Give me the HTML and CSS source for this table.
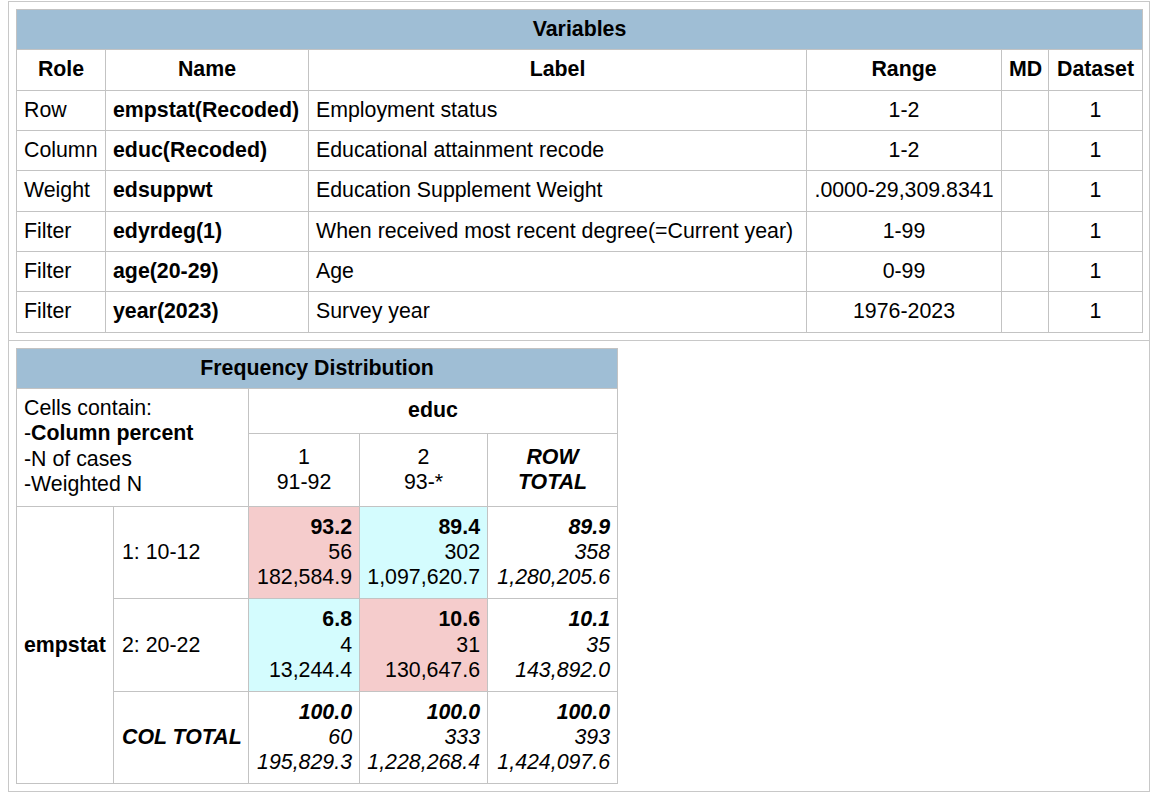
FILE: index.html
```html
<!DOCTYPE html>
<html lang="en">
<head>
<meta charset="utf-8">
<title>Variables / Frequency Distribution</title>
<link rel="stylesheet" href="styles.css">
</head>
<body>
<div class="panel">
  <section class="block block-top">
    <table class="grid vars">
      <colgroup>
        <col class="c-role"><col class="c-name"><col class="c-label"><col class="c-range"><col class="c-md"><col class="c-ds">
      </colgroup>
      <thead>
        <tr><th class="band" colspan="6">Variables</th></tr>
        <tr class="vrow">
          <th>Role</th><th>Name</th><th>Label</th><th>Range</th><th>MD</th><th>Dataset</th>
        </tr>
      </thead>
      <tbody>
        <tr class="vrow"><td>Row</td><td class="b">empstat(Recoded)</td><td>Employment status</td><td class="ctr">1-2</td><td></td><td class="ctr">1</td></tr>
        <tr class="vrow"><td>Column</td><td class="b">educ(Recoded)</td><td>Educational attainment recode</td><td class="ctr">1-2</td><td></td><td class="ctr">1</td></tr>
        <tr class="vrow"><td>Weight</td><td class="b">edsuppwt</td><td>Education Supplement Weight</td><td class="ctr">.0000-29,309.8341</td><td></td><td class="ctr">1</td></tr>
        <tr class="vrow"><td>Filter</td><td class="b">edyrdeg(1)</td><td>When received most recent degree(=Current year)</td><td class="ctr">1-99</td><td></td><td class="ctr">1</td></tr>
        <tr class="vrow"><td>Filter</td><td class="b">age(20-29)</td><td>Age</td><td class="ctr">0-99</td><td></td><td class="ctr">1</td></tr>
        <tr class="vrow"><td>Filter</td><td class="b">year(2023)</td><td>Survey year</td><td class="ctr">1976-2023</td><td></td><td class="ctr">1</td></tr>
      </tbody>
    </table>
  </section>
  <section class="block">
    <table class="grid freq">
      <colgroup>
        <col class="f-var"><col class="f-cat"><col class="f-c1"><col class="f-c2"><col class="f-tot">
      </colgroup>
      <thead>
        <tr><th class="band" colspan="5">Frequency Distribution</th></tr>
        <tr class="r-educ">
          <td class="legend" colspan="2" rowspan="2">Cells contain:<br>-<b>Column percent</b><br>-N of cases<br>-Weighted N</td>
          <th colspan="3">educ</th>
        </tr>
        <tr class="r-cols">
          <td class="ctr">1<br>91-92</td>
          <td class="ctr">2<br>93-*</td>
          <th class="bi">ROW<br>TOTAL</th>
        </tr>
      </thead>
      <tbody>
        <tr class="drow">
          <th class="rowvar" rowspan="3">empstat</th>
          <td class="cat">1: 10-12</td>
          <td class="num pink"><b>93.2</b><br>56<br>182,584.9</td>
          <td class="num cyan"><b>89.4</b><br>302<br>1,097,620.7</td>
          <td class="num it"><b>89.9</b><br>358<br>1,280,205.6</td>
        </tr>
        <tr class="drow">
          <td class="cat">2: 20-22</td>
          <td class="num cyan"><b>6.8</b><br>4<br>13,244.4</td>
          <td class="num pink"><b>10.6</b><br>31<br>130,647.6</td>
          <td class="num it"><b>10.1</b><br>35<br>143,892.0</td>
        </tr>
        <tr class="drow">
          <td class="cat bi">COL TOTAL</td>
          <td class="num it"><b>100.0</b><br>60<br>195,829.3</td>
          <td class="num it"><b>100.0</b><br>333<br>1,228,268.4</td>
          <td class="num it"><b>100.0</b><br>393<br>1,424,097.6</td>
        </tr>
      </tbody>
    </table>
  </section>
</div>
</body>
</html>
```

FILE: styles.css
```css
html, body {
  margin: 0;
  padding: 0;
  background: #ffffff;
}

body {
  font-family: "Liberation Sans", Arial, sans-serif;
  font-size: 21.33px;
  line-height: 25.33px;
  color: #000000;
}

.panel {
  margin: 1px 0 0 8px;
  width: 1142px;
  box-sizing: border-box;
  border: 1px solid #c8c8c8;
}

.block {
  padding: 7px;
}

.block-top {
  border-bottom: 1px solid #c8c8c8;
}

.grid {
  border-collapse: collapse;
  table-layout: fixed;
}

.grid th,
.grid td {
  border: 1px solid #c3c3c3;
  padding: 7px 7px;
  vertical-align: middle;
  white-space: nowrap;
  font-weight: normal;
  text-align: left;
}

.grid th {
  font-weight: bold;
  text-align: center;
}

.grid .band {
  background: #9fbed5;
  height: 25px;
  padding: 7px;
}

/* Variables table */
.vars {
  width: 1126px;
}

.c-role { width: 89px; }
.c-name { width: 203px; }
.c-label { width: 498px; }
.c-range { width: 195px; }
.c-md { width: 47px; }
.c-ds { width: 94px; }

.grid .b { font-weight: bold; }

.grid .ctr { text-align: center; }

/* Frequency table */
.freq {
  width: 601px;
}

.f-var { width: 97px; }
.f-cat { width: 135px; }
.f-c1 { width: 111px; }
.f-c2 { width: 128px; }
.f-tot { width: 130px; }

.r-educ { height: 45px; }
.r-cols { height: 73px; }

.grid .legend {
  vertical-align: top;
  padding: 7px 7px;
}

.grid .bi {
  font-weight: bold;
  font-style: italic;
}

.grid .rowvar {
  text-align: left;
}

.grid .cat {
  padding-left: 8px;
}

.grid .num {
  text-align: right;
  padding: 7.75px 7px;
}

.grid .it { font-style: italic; }

.pink { background: #f5cccc; }
.cyan { background: #d4fcfe; }
```
